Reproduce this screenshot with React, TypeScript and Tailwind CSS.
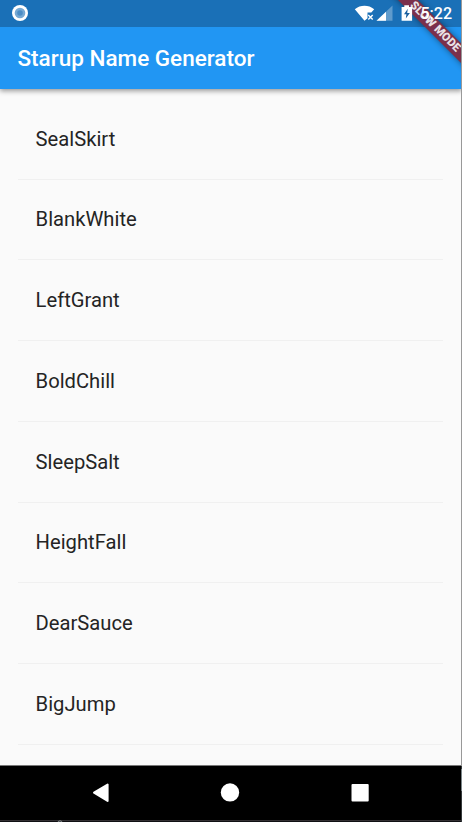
const names = ['SealSkirt', 'BlankWhite', 'LeftGrant', 'BoldChill', 'SleepSalt', 'HeightFall', 'DearSauce', 'BigJump'];

function StatusIcons() {
  return (
    <svg width="62" height="27" viewBox="0 0 62 27" className="block">
      <path d="M0.8 9.2C6.5 4.6 14.5 4.6 20.2 9.2L17.3 12.6H13.5V18.2L10.5 20.8Z" fill="#fff" />
      <path d="M14.3 15L18.7 19.6M18.7 15L14.3 19.6" stroke="#fff" strokeWidth="1.4" />
      <path d="M38.5 5.5V20.8H22.5Z" fill="#fff" fillOpacity=".3" />
      <path d="M32 11.7V20.8H22.5Z" fill="#fff" />
      <path d="M47.6 7H50.3V5.3H55V7H58.1V20.8H47.6Z" fill="#fff" />
      <path d="M53.8 8.8L50 14.3H52.4L51.8 18.6L55.9 13H53.2Z" fill="#1a5f9e" />
    </svg>
  );
}

export default function App() {
  return (
    <div className="relative flex h-[822px] w-[462px] flex-col overflow-hidden bg-[#fafafa] font-['Roboto',sans-serif]">
      <header className="relative z-10 h-[89px] shrink-0 bg-[#2196f3] shadow-[0_2px_5px_rgba(0,0,0,0.4)]">
        <div className="relative z-20 flex h-[26.5px] items-center bg-[#1a70b7] pl-[12px] pr-[10px]">
          <svg width="16" height="16" viewBox="0 0 16 16" className="block">
            <circle cx="8" cy="8" r="8" fill="#fff" />
            <circle cx="8" cy="8" r="5.3" fill="#75a9d4" />
            <circle cx="8" cy="8" r="2.8" fill="#4b8dc6" />
          </svg>
        </div>
        <h1 className="flex h-[64px] items-center pl-[17.5px] text-[22.5px] font-medium leading-none text-white">Starup Name Generator</h1>
        <div className="absolute left-[375.2px] top-[20.2px] z-30 flex h-[13.5px] w-[120px] rotate-45 items-center justify-center bg-[#7b304b] text-[11.5px] font-black leading-none text-[#e9e2e5] shadow-[0_0_6px_rgba(0,0,0,0.45)]">SLOW MODE</div>
        <div className="absolute right-[10px] top-0 z-40 flex h-[27px] items-center">
          <StatusIcons />
          <span className="ml-[4.5px] pt-px text-[16px] font-medium leading-none text-white">5:22</span>
        </div>
      </header>
      <main className="flex h-[676px] shrink-0 flex-col overflow-hidden pl-[17.6px] pr-[19px] pt-[18.3px]">
        {names.map((name) => (
          <div key={name} className="shrink-0">
            <div className="flex h-[62.75px] items-center pl-[18px] text-[20.2px] leading-none text-[#242424]">{name}</div>
            <div className="flex h-[18px] items-center">
              <div className="h-px w-full bg-[#f0f0f0]" />
            </div>
          </div>
        ))}
      </main>
      <footer className="flex h-[57px] shrink-0 items-start border-t border-[#777] bg-black">
        <svg width="462" height="56" viewBox="0 0 462 56" className="block">
          <path d="M94 26.7L107.6 18.5V35Z" fill="#fff" stroke="#fff" strokeWidth="2" strokeLinejoin="round" />
          <circle cx="230" cy="26.4" r="9.2" fill="#fff" />
          <rect x="351.5" y="18" width="17.2" height="17.4" rx="1" fill="#fff" />
          <path d="M0 54.5H462" stroke="#333033" />
          <path d="M0 55.5H462" stroke="#111114" />
          <path d="M58 56C58 54.5 62 54.5 62 56" fill="none" stroke="#8a9295" />
        </svg>
      </footer>
      <div className="absolute right-0 top-0 z-50 h-[766px] w-px bg-[#999]" />
      <div className="absolute bottom-0 right-0 z-50 h-[56px] w-px bg-[#35393b]" />
      <div className="absolute bottom-[31px] right-0 z-50 h-[22px] w-px bg-[#7b8588]" />
    </div>
  );
}
